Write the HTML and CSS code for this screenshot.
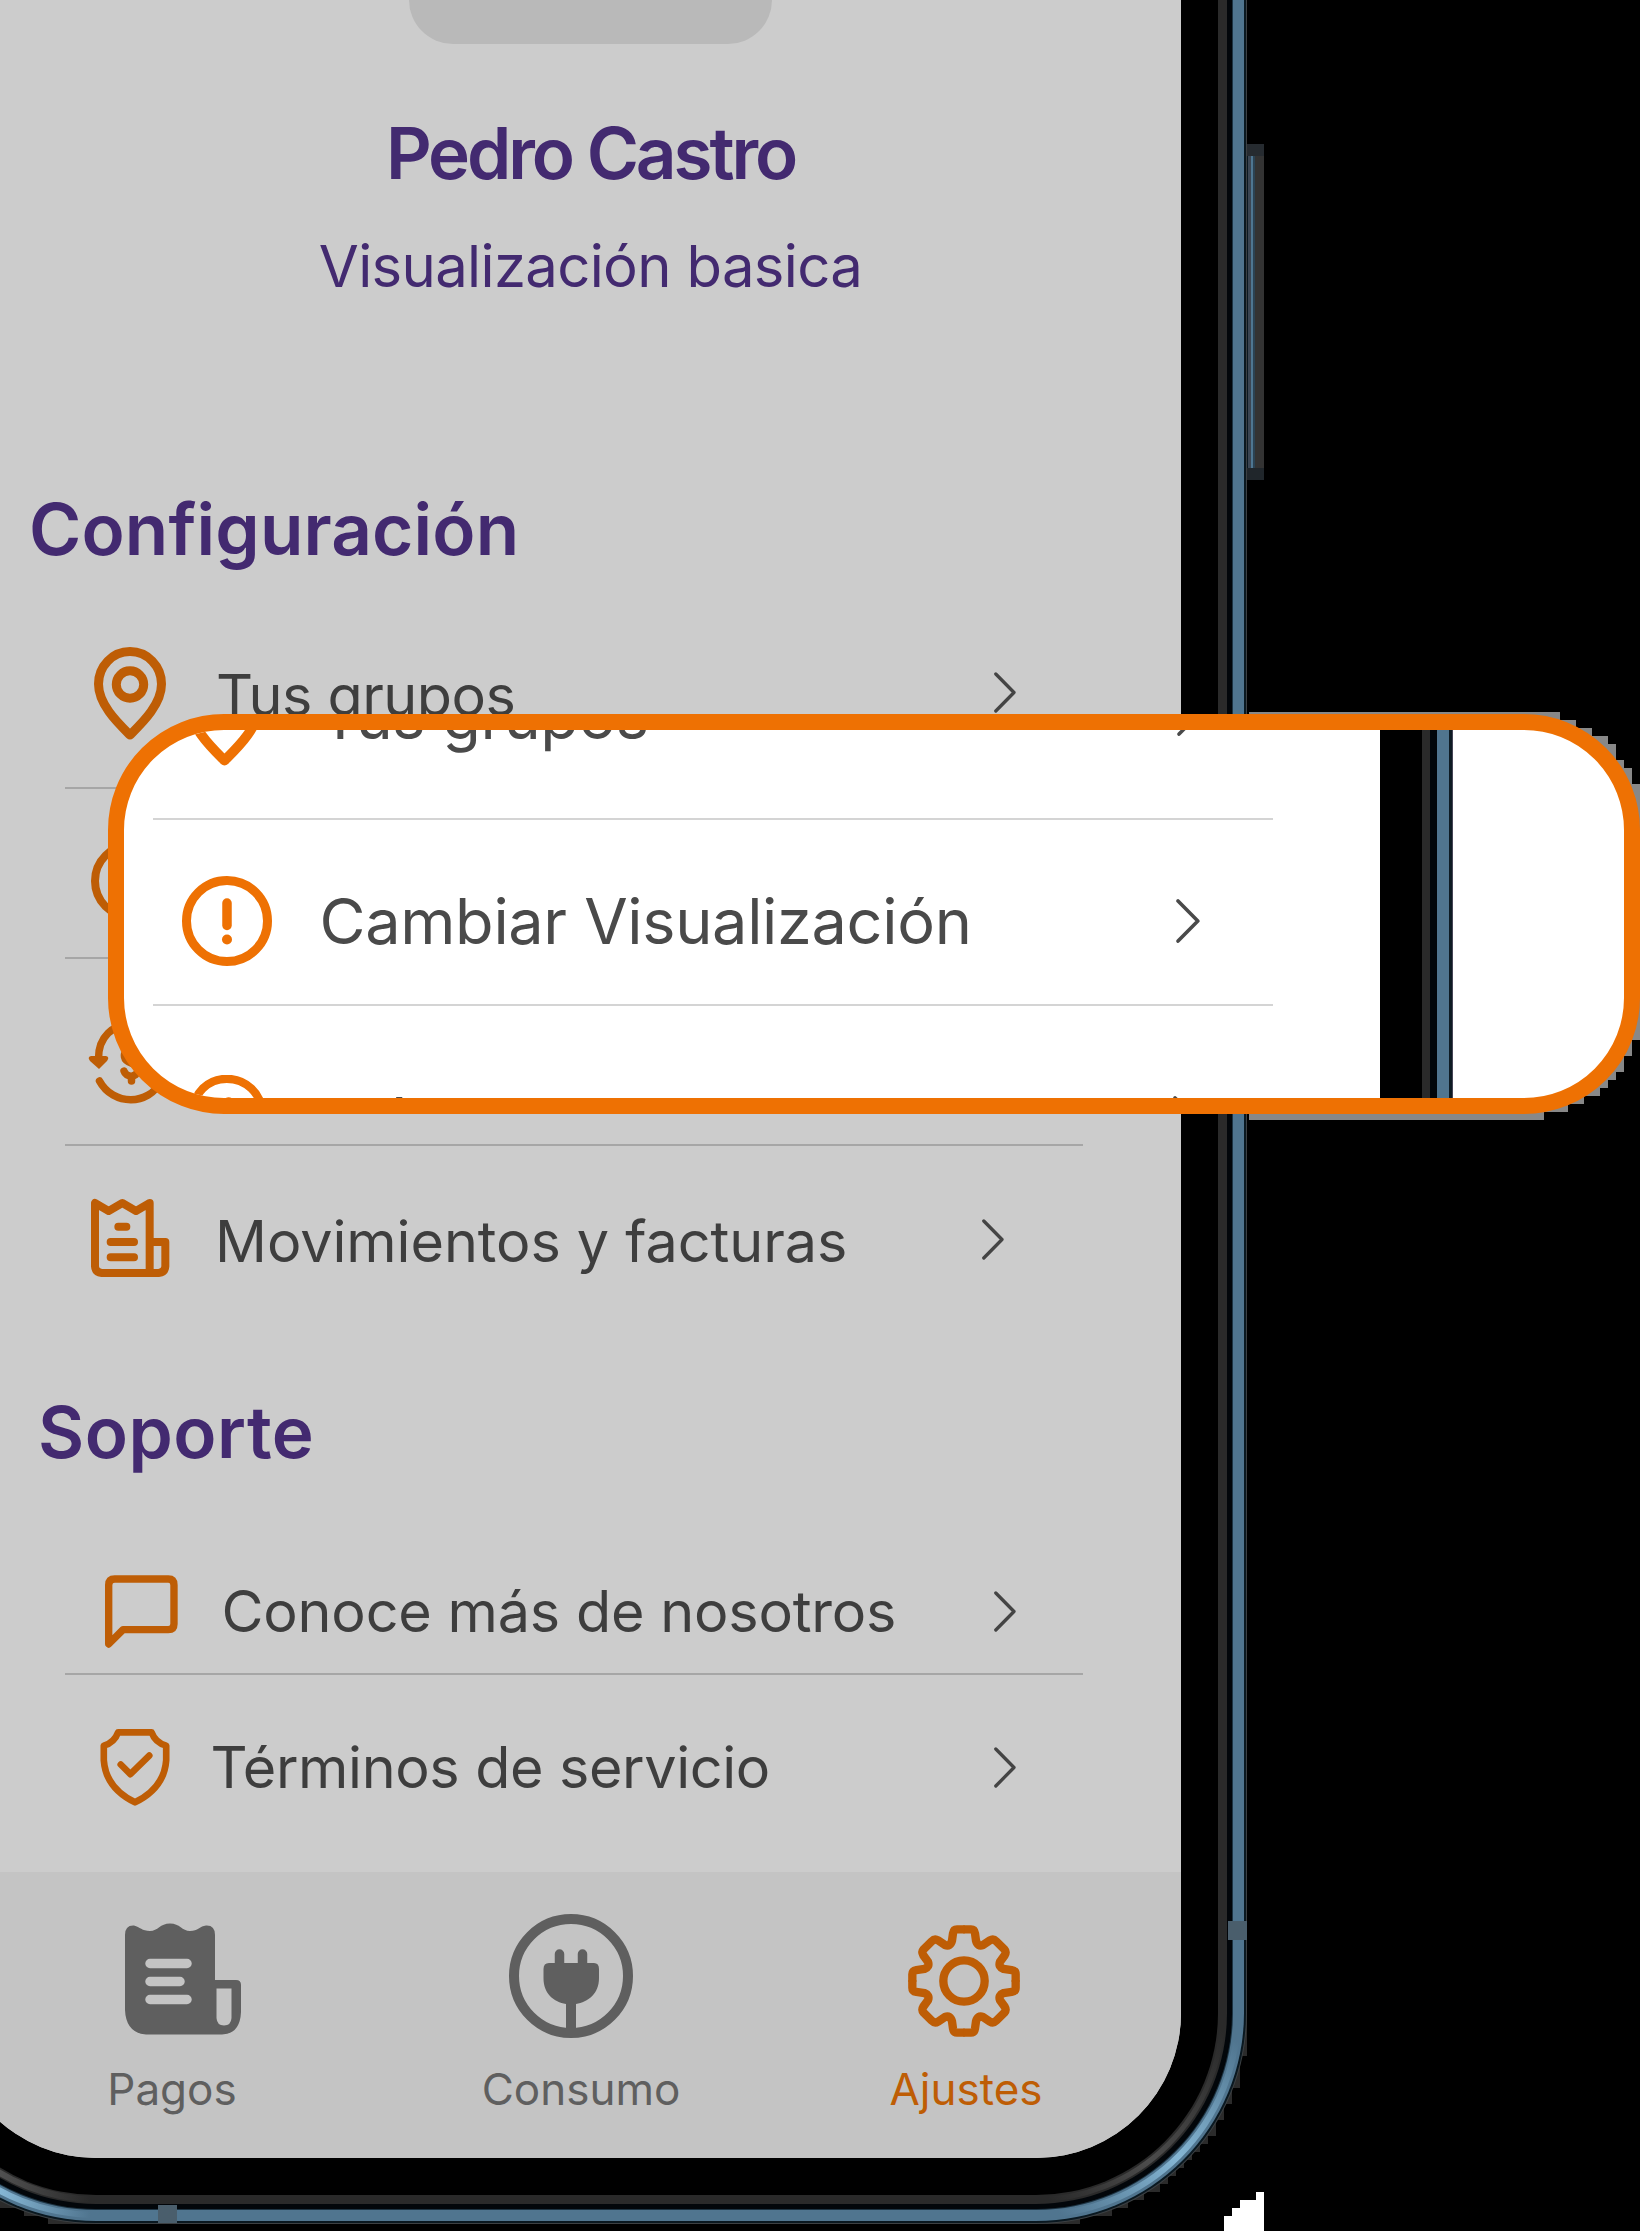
FILE: index.html
```html
<!DOCTYPE html>
<html lang="es">
<head>
<meta charset="utf-8">
<title>Ajustes</title>
<link rel="stylesheet" href="styles.css">
</head>
<body>
<svg class="sprite" aria-hidden="true">
  <symbol id="pin" viewBox="94 647 72 93"><g fill="none" stroke="currentColor" stroke-width="9" stroke-linejoin="round"><path d="M130 735C119 724 98.500 705 98.500 684A31.500 32.500 0 0 1 161.500 684C161.500 705 141 724 130 735Z"/><circle cx="130" cy="684.500" r="13.700"/></g></symbol>
  <symbol id="alert" viewBox="0 0 90 90"><circle cx="45" cy="45" r="40.500" fill="none" stroke="currentColor" stroke-width="9"/><path d="M45 27V49.500" stroke="currentColor" stroke-width="9.500" stroke-linecap="round"/><circle cx="45" cy="63.500" r="5" fill="currentColor"/></symbol>
  <symbol id="money" viewBox="88 1020 84 84"><g fill="none" stroke="currentColor" stroke-width="7.500" stroke-linecap="round" stroke-linejoin="round"><path d="M98.500 1058C98 1012 161 1012 163 1058M99.500 1080C113 1105 149 1105 161 1080"/><path d="M138 1055C137 1046 123 1047 124.500 1056C126 1065 139 1060 138 1069C137 1077 126 1077 124 1070M131.500 1044V1048M131.500 1076V1080"/></g><path d="M91 1055H106Q110 1056 107 1060L99 1068L90 1060Q87 1056 91 1055Z" fill="currentColor"/></symbol>
  <symbol id="chevron" viewBox="0 0 23 41"><path d="M2.800 2L21 20.500L2.800 39" fill="none" stroke="currentColor" stroke-width="3.300" stroke-linecap="round" stroke-linejoin="round"/></symbol>
</svg>
<div class="stage">
  <svg class="halo" viewBox="0 0 1640 2231" aria-hidden="true">
    <path fill="#2b2b2b" d="M1200 1972H1247V2056H1240V2088H1232V2104H1224V2120H1216V2136H1208V2144H1200V2152H1192V2160H1184V2168H1176V2176H1168V2184H1160V2192H1144V2200H1128V2208H1112V2216H1080V2224H980V2100ZM0 2100V2208H24V2216H48V2224H130V2100Z"/>
    <path fill="#fff" d="M1264 2231V2192H1256V2200H1240V2208H1232V2216H1224V2231Z"/>
    <path fill="#888" d="M1249 712H1560V720H1576V728H1592V736H1608V744H1616V760H1624V768H1632V784H1640V1040H1632V1056H1624V1072H1616V1080H1608V1088H1600V1096H1584V1104H1568V1112H1544V1120H1249Z"/>
  </svg>
  <div class="power"></div>
  <main class="phone">
    <div class="notch"></div>
    <h1 class="name">Pedro Castro</h1>
    <p class="view">Visualización basica</p>
    <h2 class="heading config">Configuración</h2>
    <ul class="list">
      <li class="row groups"><svg class="icon"><use href="#pin"/></svg><span class="label">Tus grupos</span><svg class="chev"><use href="#chevron"/></svg></li>
      <li class="row change"><svg class="icon"><use href="#alert"/></svg></li>
      <li class="row pay"><svg class="icon"><use href="#money"/></svg></li>
      <li class="row moves"><svg class="icon" viewBox="93 118 234 234"><g fill="none" stroke="currentColor" stroke-width="24" stroke-linecap="round" stroke-linejoin="round"><path d="M269 338V130L228 154L187 130L146 154L105 130V320Q106 338 125 340H296Q315 338 316 320V247H275M175 201H199M152 247H222M152 293H222"/></g></svg><span class="label">Movimientos y facturas</span><svg class="chev"><use href="#chevron"/></svg></li>
    </ul>
    <h2 class="heading support">Soporte</h2>
    <ul class="list">
      <li class="row about"><svg class="icon" viewBox="136 78 218 218"><path d="M147 284V108Q147 90 165 90H325Q342 90 342 108V224Q342 241 325 241H190Z" fill="none" stroke="currentColor" stroke-width="22" stroke-linejoin="round"/></svg><span class="label">Conoce más de nosotros</span><svg class="chev"><use href="#chevron"/></svg></li>
      <li class="row terms"><svg class="icon" viewBox="118 536 210 232"><g fill="none" stroke="currentColor" stroke-width="20" stroke-linejoin="round"><path d="M172 546H273Q284 577 317 586V630Q311 714 223 757Q135 714 129 630V586Q161 577 172 546Z"/><path d="M180 643L209 672L266 616" stroke-linecap="round"/></g></svg><span class="label">Términos de servicio</span><svg class="chev"><use href="#chevron"/></svg></li>
    </ul>
    <nav class="tabs">
      <a class="tab bills"><svg class="tab-icon" viewBox="124 1922 118 113"><path fill="currentColor" d="M125 1935Q125 1925 134 1925.500C140 1927 142 1931 150 1931C158 1931 160 1923.500 170 1923.500C180 1923.500 182 1931 190 1931C198 1931 200 1926 206 1925.500Q215 1925 215 1935V1980H236Q241 1980 241 1985V2012Q240 2034 222 2034.500H146Q126 2033 125 2010Z"/><path fill="#c4c4c4" d="M216.500 1988.500H231.500V2018Q231 2025.500 224 2025.500T216.500 2018Z"/><path d="M150 1963.500H187M150 1981.500H180M150 1999.500H187" stroke="#c4c4c4" stroke-width="9.500" stroke-linecap="round"/></svg><span>Pagos</span></a>
      <a class="tab usage"><svg class="tab-icon" viewBox="508 1912 126 126"><circle cx="571" cy="1975" r="57" fill="none" stroke="currentColor" stroke-width="10"/><path d="M559.500 1953V1966M582.500 1953V1966" stroke="currentColor" stroke-width="9.500" stroke-linecap="round"/><path fill="currentColor" d="M549 1962H594Q599 1962 599 1968V1977C599 1993 588 2001 576 2003V2032H566V2003C554 2001 543.500 1993 543.500 1977V1968Q543.500 1962 549 1962Z"/></svg><span>Consumo</span></a>
      <a class="tab settings"><svg class="tab-icon" viewBox="-168 -168 336 336"><defs><path id="tooth" d="M-2 -155H21Q31 -155 33 -143L36 -121Q41 -102 57 -108L78 -122Q88 -128 97 -119L121 -95Q128 -87 122 -77L108 -58Q102 -42 119 -36L143 -33Q155 -31 155 -20V2"/><path id="tooth2" d="M2 -155H-21Q-31 -155 -33 -143L-36 -121Q-41 -102 -57 -108L-78 -122Q-88 -128 -97 -119L-121 -95Q-128 -87 -122 -77L-108 -58Q-102 -42 -119 -36L-143 -33Q-155 -31 -155 -20V2"/></defs><g fill="none" stroke="currentColor" stroke-width="25"><use href="#tooth"/><use href="#tooth2"/><use href="#tooth" transform="rotate(180)"/><use href="#tooth2" transform="rotate(180)"/><circle r="62"/></g></svg><span>Ajustes</span></a>
    </nav>
  </main>
  <svg class="halo" viewBox="0 0 1640 2231" aria-hidden="true">
    <defs>
      <linearGradient id="shineR" gradientUnits="userSpaceOnUse" x1="1236" y1="2040" x2="1060" y2="2214"><stop offset="0" stop-color="#85b6d4" stop-opacity="0"/><stop offset=".5" stop-color="#85b6d4"/><stop offset="1" stop-color="#85b6d4" stop-opacity="0"/></linearGradient>
      <linearGradient id="greyR" gradientUnits="userSpaceOnUse" x1="1222" y1="2030" x2="1050" y2="2200"><stop offset="0" stop-color="#4c4c4c" stop-opacity="0"/><stop offset=".6" stop-color="#4c4c4c"/><stop offset="1" stop-color="#4c4c4c" stop-opacity="0"/></linearGradient>
      <linearGradient id="shineL" gradientUnits="userSpaceOnUse" x1="0" y1="0" x2="90" y2="0"><stop offset="0" stop-color="#85b6d4"/><stop offset="1" stop-color="#85b6d4" stop-opacity="0"/></linearGradient>
      <linearGradient id="greyL" gradientUnits="userSpaceOnUse" x1="0" y1="0" x2="90" y2="0"><stop offset="0" stop-color="#505050"/><stop offset="1" stop-color="#505050" stop-opacity="0"/></linearGradient>
    </defs>
    <g fill="none" stroke-width="6">
      <path stroke="url(#shineR)" d="M1238 2013A202 202 0 0 1 1036 2215"/>
      <path stroke="url(#greyR)" stroke-width="5" d="M1222.500 2013A186.500 186.500 0 0 1 1036 2199.500"/>
      <path stroke="url(#shineL)" d="M96 2215A202 202 0 0 1 -106 2013"/>
      <path stroke="url(#greyL)" d="M96 2199.500A186.500 186.500 0 0 1 -90.500 2013"/>
    </g>
    <path fill="#4a5e6c" d="M1228 1921H1247V1940H1228ZM158 2205H177V2223H158Z"/>
  </svg>
  <section class="callout">
    <ul class="zoomed">
      <li class="row z-groups"><svg class="icon"><use href="#pin"/></svg><span class="label">Tus grupos</span><svg class="chev"><use href="#chevron"/></svg></li>
      <li class="row z-change"><svg class="icon"><use href="#alert"/></svg><span class="label">Cambiar Visualización</span><svg class="chev"><use href="#chevron"/></svg></li>
      <li class="row z-pay"><svg class="icon"><use href="#money"/></svg><span class="label">Métodos de pago</span><svg class="chev"><use href="#chevron"/></svg></li>
    </ul>
    <div class="edge"></div>
  </section>
</div>
</body>
</html>
```
FILE: styles.css
```css
* { box-sizing: border-box; }
body, h1, h2, p, ul { margin: 0; padding: 0; }
body { background: #000; font-family: Inter, "Liberation Sans", sans-serif; }
ul { list-style: none; }
.sprite { position: absolute; width: 0; height: 0; }
.stage { position: relative; width: 1640px; height: 2231px; overflow: hidden; background: #000; }
.halo { position: absolute; inset: 0; width: 1640px; height: 2231px; }

.power {
  position: absolute; left: 1246px; top: 144px; width: 18px; height: 336px;
  background: linear-gradient(90deg, #0a1922 0 2px, #3b4653 2px 5px, #4e7691 5px 7px, #2b4252 7px 9px, #333 9px);
  border-top: 12px solid #262b30; border-bottom: 12px solid #20262b;
}

.phone {
  position: relative; display: flex; flex-direction: column;
  width: 1230px; height: 2158px; margin-left: -49px; padding-left: 49px;
  background: #ccc; border-radius: 0 0 145px 145px; overflow: hidden;
  color: #432a70;
}
.phone { box-shadow: 0 0 0 37px #000, 0 0 0 46px #2a2a2a, 0 0 0 51px #02060a, 0 0 0 52px #1d3443, 0 0 0 63px #50758f, 0 0 0 65px #0a1820, 0 0 0 66px #3c4043; }

.notch { align-self: center; width: 363px; height: 44px; background: #b9b9b9; border-radius: 0 0 46px 46px; }
.name { margin-top: 69px; height: 80px; line-height: 80px; text-align: center; font-size: 71px; font-weight: 600; letter-spacing: -3.1px; white-space: nowrap; }
.view { margin-top: 38px; height: 70px; line-height: 70px; text-align: center; font-size: 58px; letter-spacing: -.65px; white-space: nowrap; }
.heading { height: 80px; line-height: 80px; font-size: 71px; font-weight: 600; white-space: nowrap; }
.config { margin: 188px 0 33px 29px; letter-spacing: .15px; }
.support { margin: 57px 0 77px 38px; letter-spacing: .5px; }

.row { display: flex; align-items: center; width: 1018px; margin-left: 65px; border-bottom: 2px solid #a6a6a6; }
.icon { flex: none; color: #be5d05; overflow: visible; }
.label { flex: none; color: #3e3e3e; font-size: 57.5px; line-height: 70px; white-space: nowrap; }
.chev { flex: none; width: 23px; height: 41px; margin-left: auto; color: #444; }

.groups { height: 187px; padding: 0 67px 0 29px; }
.groups .icon { width: 72px; height: 93px; margin-right: 50px; margin-bottom: 2px; }
.groups .label { letter-spacing: -.5px; }
.groups .chev { margin-bottom: 4px; }
.change { height: 170px; padding-left: 26px; padding-top: 16px; }
.change .icon { width: 80px; height: 80px; }
.pay { height: 187px; padding-left: 23px; padding-top: 22px; }
.pay .icon { width: 84px; height: 84px; }
.moves { height: 189px; padding: 0 79px 0 26px; border-bottom: 0; }
.moves .icon { width: 78px; height: 78px; margin-right: 46px; margin-bottom: 5px; }
.moves .label { letter-spacing: -.06px; }
.moves .chev { margin-bottom: 3px; }
.about { height: 126px; padding: 0 67px 0 40px; }
.about .icon { width: 73px; height: 73px; margin-right: 43.500px; }
.about .label { letter-spacing: -.2px; }
.terms { height: 184px; padding: 0 67px 0 34.500px; border-bottom: 0; }
.terms .icon { width: 70px; height: 77px; margin-right: 41px; }
.terms .label { letter-spacing: -.37px; }

.tabs { display: flex; flex: 1; margin: 13px 0 0 -49px; padding-left: 49px; background: #c4c4c4; color: #5f5f5f; }
.tab { display: flex; flex-direction: column; align-items: center; width: 394px; font-size: 44px; line-height: 54px; }
.tab-icon { flex: none; }
.tab span { margin-top: auto; margin-bottom: 42px; white-space: nowrap; }
.bills { width: 344px; }
.bills .tab-icon { width: 118px; height: 113px; margin: 50px 0 0 22px; }
.usage { width: 474px; }
.usage .tab-icon { width: 126px; height: 126px; margin: 41px 20px 0 0; }
.settings { width: 296px; color: #be5d05; }
.settings .tab-icon { width: 112px; height: 112px; margin: 53px 4px 0 0; }

.callout {
  position: absolute; left: 108px; top: 714px; display: flex;
  width: 1532px; height: 400px; overflow: hidden;
  border: 16px solid #ee7103; border-radius: 116px; background: #fff;
}
.zoomed { flex: none; width: 1256px; height: 368px; padding-left: 29px; }
.zoomed .row { width: 1120px; margin-left: 0; border-color: #d4d4d4; }
.zoomed .icon { color: #ee7103; }
.zoomed .label { color: #4a4a4a; font-size: 63px; }
.zoomed .chev { width: 25px; height: 46px; color: #4a4a4a; }
.zoomed .z-groups { height: 207px; margin-top: -117px; padding: 0 72px 0 32px; }
.z-groups .icon { width: 79px; height: 102px; margin-right: 56px; margin-bottom: 2px; }
.z-groups .label { letter-spacing: -.5px; }
.z-groups .chev { margin-bottom: 4px; }
.zoomed .z-change { height: 186px; padding: 18px 73px 0 29px; }
.z-change .icon { width: 90px; height: 90px; margin-right: 47.500px; }
.z-change .label { letter-spacing: -.32px; }
.zoomed .z-pay { height: 226px; padding: 6px 76px 0 28px; }
.z-pay .icon { width: 92px; height: 92px; margin-right: 46px; }
.z-pay .chev { margin-bottom: 6px; }
.edge { flex: none; width: 73px; height: 368px; background: linear-gradient(90deg, #000 0 42px, #2a2a2a 42px 50px, #02060a 50px 57px, #50758f 57px 69px, #0e1b24 69px 72px, #445 72px); }
```
